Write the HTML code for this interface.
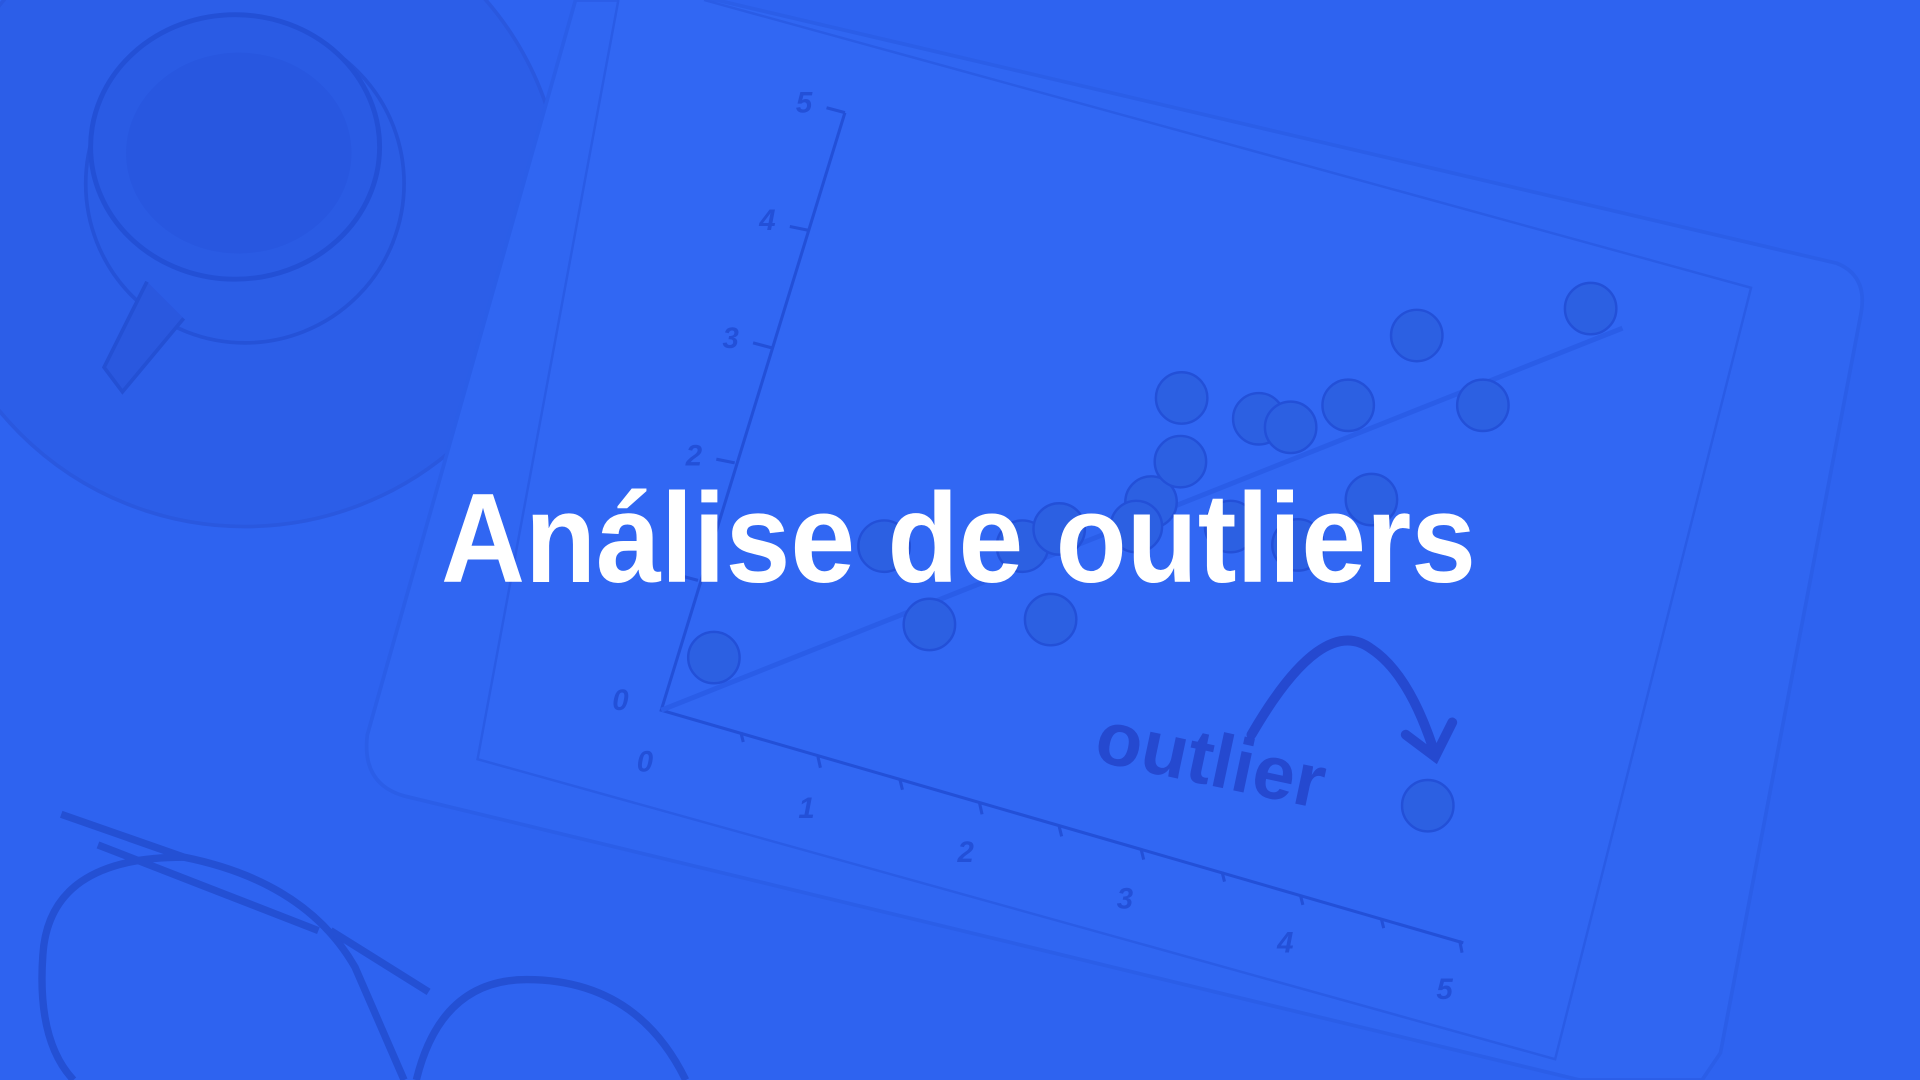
<!DOCTYPE html>
<html><head><meta charset="utf-8"><style>
html,body{margin:0;padding:0;width:1920px;height:1080px;overflow:hidden;background:#2e63f0}
</style></head><body>
<svg width="1920" height="1080" viewBox="0 0 1920 1080" xmlns="http://www.w3.org/2000/svg">
<rect width="1920" height="1080" fill="#2e63f0"/>
<g transform="scale(1.2245)" fill="none">
 <circle cx="200" cy="170" r="260" fill="#2c5ee8" stroke="#2a58df" stroke-width="3"/>
 <circle cx="200" cy="150" r="130" fill="#2b5de6" stroke="#2552d8" stroke-width="3"/>
 <ellipse cx="192" cy="120" rx="118" ry="108" fill="#2a5be4" stroke="#2350d6" stroke-width="4"/>
 <ellipse cx="195" cy="125" rx="92" ry="82" fill="#2857e0"/>
 <path d="M120 230 L85 300 L100 320 L150 260" fill="#2a58df" stroke="#2450d4" stroke-width="3"/>
 <path d="M585 0 L1500 215 Q1525 225 1520 255 L1405 860 L1390 882 L1290 882 L330 650 Q295 640 300 600 L470 0 Z" fill="#3066f2" stroke="#2b5ee8" stroke-width="3"/>
 <path d="M575 0 L1430 235 L1270 865 L390 620 L505 0" fill="#3167f3" stroke="#2a5ce6" stroke-width="2"/>
 <g stroke="#2350d8" stroke-width="2.5">
  <path d="M690 92 L540 580 L1195 770"/>
  <path d="M675 88 L690 92 M645 185 L660 188 M615 280 L630 284 M585 375 L600 378 M555 470 L570 474"/>
  <path d="M605 598 L607 606 M668 618 L670 627 M735 637 L737 645 M800 656 L802 665 M865 675 L867 683 M932 694 L934 702 M998 712 L1000 720 M1062 731 L1064 739 M1128 750 L1130 758 M1192 768 L1194 778"/>
 </g>
 <path d="M540 580 L1325 268" stroke="#2a5de8" stroke-width="4"/>
 <g font-family="Liberation Sans, sans-serif" font-style="italic" font-weight="bold" font-size="24" fill="#2350d8">
  <text x="650" y="92">5</text><text x="620" y="188">4</text><text x="590" y="284">3</text><text x="560" y="380">2</text><text x="500" y="580">0</text>
  <text x="520" y="630">0</text><text x="652" y="668">1</text><text x="782" y="704">2</text><text x="912" y="742">3</text><text x="1043" y="778">4</text><text x="1173" y="816">5</text>
 </g>
 <g fill="#2c60e2" stroke="#2350d8" stroke-width="2">
  <circle cx="583" cy="537" r="21"/><circle cx="759" cy="510" r="21"/><circle cx="858" cy="506" r="21"/>
  <circle cx="722" cy="446" r="21"/><circle cx="835" cy="446" r="21"/><circle cx="865" cy="432" r="21"/>
  <circle cx="940" cy="410" r="21"/><circle cx="928" cy="430" r="21"/><circle cx="964" cy="377" r="21"/>
  <circle cx="965" cy="325" r="21"/><circle cx="1028" cy="342" r="21"/><circle cx="1054" cy="349" r="21"/>
  <circle cx="1101" cy="331" r="21"/><circle cx="1157" cy="274" r="21"/><circle cx="1211" cy="331" r="21"/>
  <circle cx="1299" cy="252" r="21"/><circle cx="1120" cy="408" r="21"/><circle cx="1005" cy="430" r="21"/>
  <circle cx="1060" cy="445" r="21"/><circle cx="1166" cy="658" r="21"/>
 </g>
 <path d="M1022 600 Q1080 500 1120 530 Q1150 550 1170 610 M1148 600 L1172 618 L1186 590" stroke="#2549d0" stroke-width="8" stroke-linecap="round"/>
 <text x="888" y="642" transform="rotate(12 990 650)" font-family="Liberation Sans, sans-serif" font-weight="bold" font-size="62" fill="#2549d0">outlier</text>
 <g stroke="#2450d4" stroke-width="6">
  <path d="M50 665 L150 700 Q250 720 290 790 Q330 882 330 882"/>
  <path d="M150 700 Q40 700 35 780 Q30 850 60 882"/>
  <path d="M80 690 L260 760"/>
  <path d="M340 882 Q360 800 430 800 Q520 800 560 882"/>
  <path d="M270 760 L350 810"/>
 </g>
</g>
<text x="441" y="582" textLength="1035" lengthAdjust="spacingAndGlyphs" font-family="Liberation Sans, sans-serif" font-weight="bold" font-size="127" fill="#ffffff">Análise de outliers</text>
</svg>
</body></html>
